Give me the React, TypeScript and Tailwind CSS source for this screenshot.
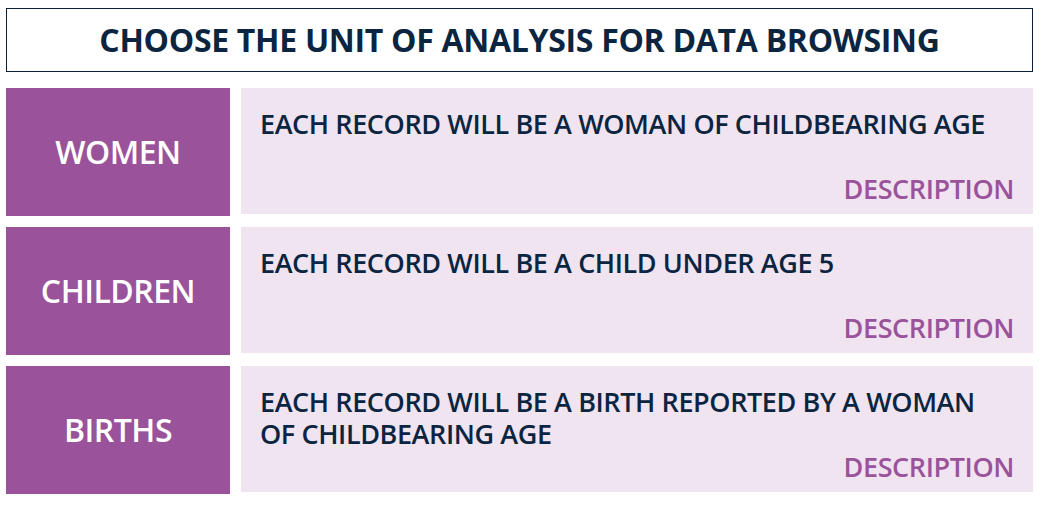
import React from "react";

type Unit = {
  label: string;
  text: string;
};

const units: Unit[] = [
  { label: "WOMEN", text: "EACH RECORD WILL BE A WOMAN OF CHILDBEARING AGE" },
  { label: "CHILDREN", text: "EACH RECORD WILL BE A CHILD UNDER AGE 5" },
  { label: "BIRTHS", text: "EACH RECORD WILL BE A BIRTH REPORTED BY A WOMAN OF CHILDBEARING AGE" },
];

const App: React.FC = () => {
  return (
    <div
      className="w-[1042px] h-[512px] bg-white pl-[6px] pr-[9px] pt-[8px]"
      style={{ fontFamily: '"Open Sans", "Noto Sans", sans-serif' }}
    >
      <div className="h-[64px] border border-[#0d2238] flex items-center justify-center">
        <h1 className="text-[32px] font-bold text-[#0b2540] tracking-[-0.3px] leading-none">
          CHOOSE THE UNIT OF ANALYSIS FOR DATA BROWSING
        </h1>
      </div>

      <div className="mt-[16px] flex flex-col gap-[11px]">
        {units.map((u) => (
          <div key={u.label} className="flex gap-[11px] h-[128px]">
            <div className="w-[224px] shrink-0 bg-[#9a539a] flex items-center justify-center">
              <span className="text-white text-[32px] font-semibold tracking-[-0.5px]">{u.label}</span>
            </div>
            <div className="flex-1 bg-[#efe4f0] mb-[2px] flex flex-col pl-[19px] pr-[19px] pt-[20px] pb-[9px]">
              <p className="text-[27px] font-semibold text-[#0b2540] leading-[32px] tracking-[-0.4px] pr-[10px]">
                {u.text}
              </p>
              <div className="mt-auto text-right text-[27px] font-semibold text-[#9a539a] tracking-[-0.4px] leading-[32px]">
                DESCRIPTION
              </div>
            </div>
          </div>
        ))}
      </div>
    </div>
  );
};

export default App;
